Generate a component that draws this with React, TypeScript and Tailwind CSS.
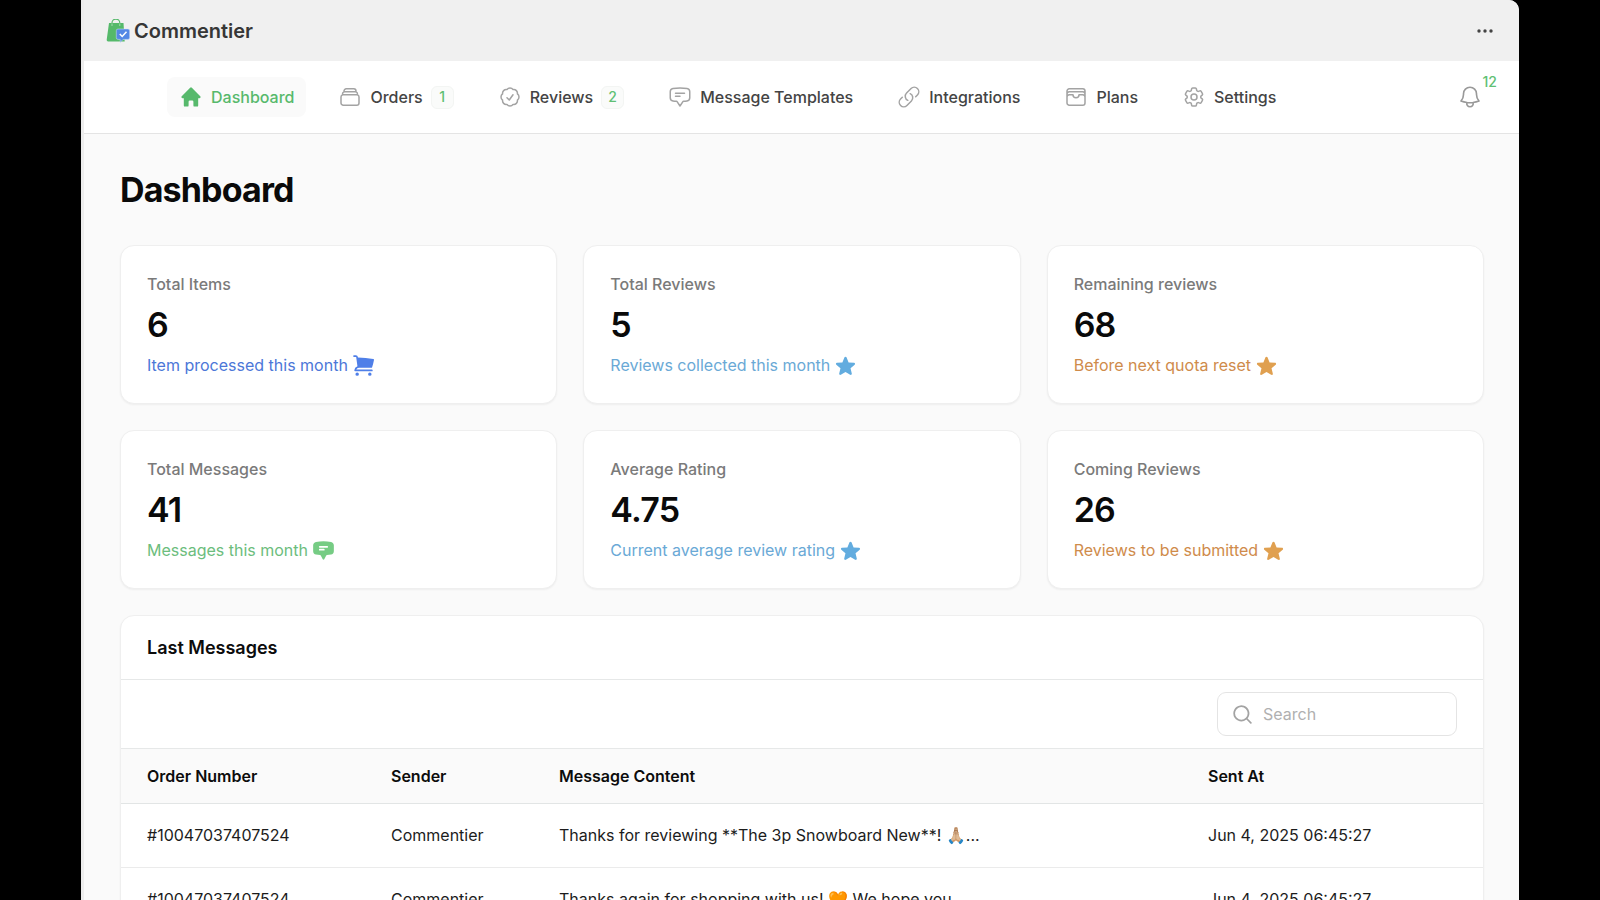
import clsx from "clsx"
import type { IconType } from "react-icons"
import {
  HiMiniChatBubbleBottomCenterText,
  HiMiniHome,
  HiMiniMagnifyingGlass,
  HiMiniShoppingCart,
  HiMiniStar,
  HiOutlineBell,
  HiOutlineChatBubbleBottomCenterText,
  HiOutlineCheckBadge,
  HiOutlineCog6Tooth,
  HiOutlineLink,
  HiOutlineRectangleStack,
  HiOutlineWallet,
} from "react-icons/hi2"

type NavItem = {
  label: string
  icon: IconType
  badge?: number
  active?: boolean
}

const navItems: NavItem[] = [
  { label: "Dashboard", icon: HiMiniHome, active: true },
  { label: "Orders", icon: HiOutlineRectangleStack, badge: 1 },
  { label: "Reviews", icon: HiOutlineCheckBadge, badge: 2 },
  { label: "Message Templates", icon: HiOutlineChatBubbleBottomCenterText },
  { label: "Integrations", icon: HiOutlineLink },
  { label: "Plans", icon: HiOutlineWallet },
  { label: "Settings", icon: HiOutlineCog6Tooth },
]

const stats = [
  { label: "Total Items", value: "6", hint: "Item processed this month", icon: HiMiniShoppingCart, text: "text-[#4c77d8]", fill: "text-[#4f7fe8]" },
  { label: "Total Reviews", value: "5", hint: "Reviews collected this month", icon: HiMiniStar, text: "text-[#6aa9d6]", fill: "text-[#62acdf]" },
  { label: "Remaining reviews", value: "68", hint: "Before next quota reset", icon: HiMiniStar, text: "text-[#cf8b4b]", fill: "text-[#e0a050]" },
  { label: "Total Messages", value: "41", hint: "Messages this month", icon: HiMiniChatBubbleBottomCenterText, text: "text-[#6cbd7d]", fill: "text-[#76cc84]" },
  { label: "Average Rating", value: "4.75", hint: "Current average review rating", icon: HiMiniStar, text: "text-[#6aa9d6]", fill: "text-[#62acdf]" },
  { label: "Coming Reviews", value: "26", hint: "Reviews to be submitted", icon: HiMiniStar, text: "text-[#cf8b4b]", fill: "text-[#e0a050]" },
]

const messages = [
  { order: "#10047037407524", sender: "Commentier", content: "Thanks for reviewing **The 3p Snowboard New**! 🙏🏼...", sentAt: "Jun 4, 2025 06:45:27" },
  { order: "#10047037407524", sender: "Commentier", content: "Thanks again for shopping with us! 🧡 We hope you...", sentAt: "Jun 4, 2025 06:45:27" },
]

function Logo() {
  return (
    <svg viewBox="0 0 24 24" className="size-6" aria-hidden>
      <path d="M6 5V4a3.900 3.900 0 0 1 7.800 0v1" fill="none" stroke="#57b96b" strokeWidth="1.2" />
      <path d="M3 4h14.500l1.200 18.500H2.200A1.500 1.500 0 0 1 .7 20.800z" fill="#55b96a" />
      <path d="M6 7V4.500M13.800 7V4.500" fill="none" stroke="#a5dcb1" strokeWidth="1" />
      <path
        d="M12 10h10a1.700 1.700 0 0 1 1.700 1.700v7a1.700 1.700 0 0 1-1.700 1.700h-5L14.200 23.500v-3.100H12a1.700 1.700 0 0 1-1.700-1.700v-7A1.700 1.700 0 0 1 12 10z"
        fill="#5488e5"
        stroke="#d5e2f8"
        strokeWidth="0.5"
      />
      <path d="m13.800 15 2.400 2.500 4.300-4.700" fill="none" stroke="#fff" strokeWidth="1.5" />
    </svg>
  )
}

function TopBar() {
  return (
    <header className="flex h-[61px] items-center justify-between bg-[#f0f0f0] pr-6 pl-[22px]">
      <div className="flex items-center gap-1">
        <Logo />
        <span className="text-xl leading-7 font-semibold text-[#363636]">Commentier</span>
      </div>
      <button type="button" aria-label="More actions" className="text-[#444]">
        <svg viewBox="0 0 20 20" className="size-5" fill="currentColor" aria-hidden>
          <circle cx="4" cy="10" r="1.7" />
          <circle cx="10" cy="10" r="1.7" />
          <circle cx="16" cy="10" r="1.7" />
        </svg>
      </button>
    </header>
  )
}

function Nav() {
  return (
    <nav className="flex h-[73px] items-center justify-between border-b border-[#e4e4e4] bg-white pr-6 pl-[83px]">
      <ul className="flex items-center gap-5">
        {navItems.map((item) => {
          const Icon = item.icon
          return (
            <li key={item.label}>
              <a
                href="#"
                className={clsx(
                  "flex h-10 items-center gap-2 rounded-lg px-3 text-base font-medium",
                  item.active ? "bg-[#fafafa] text-[#57b96c]" : "text-[#444]",
                )}
              >
                <Icon className={clsx("size-6", item.active ? "text-[#57b96c]" : "text-[#a3a3a3]")} aria-hidden />
                {item.label}
                {item.badge ? (
                  <span className="flex size-[23px] items-center justify-center rounded-md border border-[#f3f5f3] bg-[#fafbfa] text-sm text-[#5fc074]">
                    {item.badge}
                  </span>
                ) : null}
              </a>
            </li>
          )
        })}
      </ul>
      <button type="button" aria-label="Notifications" className="relative mr-3 text-[#999]">
        <HiOutlineBell className="size-[26px]" aria-hidden />
        <span className="absolute -top-3 -right-3.5 text-sm leading-5 font-medium text-[#5fc074]">12</span>
      </button>
    </nav>
  )
}

function LastMessages() {
  return (
    <section className="overflow-hidden rounded-[14px] border border-[#efefef] bg-white shadow-xs">
      <h2 className="border-b border-[#e6e8e8] px-[26px] py-[18px] text-lg leading-[27px] font-semibold text-[#0c0c0c]">
        Last Messages
      </h2>
      <div className="flex justify-end border-b border-[#e6e8e8] px-[26px] py-3">
        <label className="flex h-11 w-60 items-center gap-[9px] rounded-[9px] border border-[#e4e4e4] px-[13px]">
          <HiMiniMagnifyingGlass className="size-[23px] shrink-0 text-[#a3a3a3]" aria-hidden />
          <input
            type="search"
            aria-label="Search"
            placeholder="Search"
            className="w-full min-w-0 bg-transparent text-base text-[#222] outline-none placeholder:text-[#b0b0b0]"
          />
        </label>
      </div>
      <table className="w-full table-fixed text-left text-base text-[#1c1c1c]">
        <thead>
          <tr className="h-[54px] border-b border-[#e2e5e5] bg-[#fafafa] text-[#0c0c0c]">
            <th className="w-[258px] pr-3 pl-[26px] font-semibold">Order Number</th>
            <th className="w-[168px] px-3 font-semibold">Sender</th>
            <th className="px-3 font-semibold">Message Content</th>
            <th className="w-[287px] px-3 font-semibold">Sent At</th>
          </tr>
        </thead>
        <tbody>
          {messages.map((message, idx) => (
            <tr key={idx} className="h-16 border-b border-[#ebebeb]">
              <td className="pr-3 pl-[26px]">{message.order}</td>
              <td className="px-3">{message.sender}</td>
              <td className="truncate px-3">{message.content}</td>
              <td className="px-3">{message.sentAt}</td>
            </tr>
          ))}
        </tbody>
      </table>
    </section>
  )
}

export default function App() {
  return (
    <div className="h-screen overflow-hidden bg-black px-[81px] font-['Inter',sans-serif]">
      <div className="min-h-full overflow-hidden rounded-tr-[10px] border-l-[3px] border-[#ededed] bg-[#fafafa]">
        <TopBar />
        <Nav />
        <main className="pt-9 pr-[35px] pl-9">
          <h1 className="text-[34px] leading-10 font-bold tracking-tight text-[#0a0a0a]">Dashboard</h1>
          <div className="mt-[35px] grid grid-cols-3 gap-[26px]">
            {stats.map((stat) => {
              const Icon = stat.icon
              return (
                <div key={stat.label} className="rounded-[14px] border border-[#efefef] bg-white p-[26px] shadow-xs">
                  <p className="text-base font-medium text-[#7a7a7a]">{stat.label}</p>
                  <p className="mt-2 text-[34px] leading-[41px] font-semibold tracking-tight text-[#0a0a0a]">{stat.value}</p>
                  <p className={clsx("mt-2 flex items-center gap-1 text-base", stat.text)}>
                    {stat.hint}
                    <Icon className={clsx("size-[23px]", stat.fill)} aria-hidden />
                  </p>
                </div>
              )
            })}
          </div>
          <div className="mt-[26px]">
            <LastMessages />
          </div>
        </main>
      </div>
    </div>
  )
}
